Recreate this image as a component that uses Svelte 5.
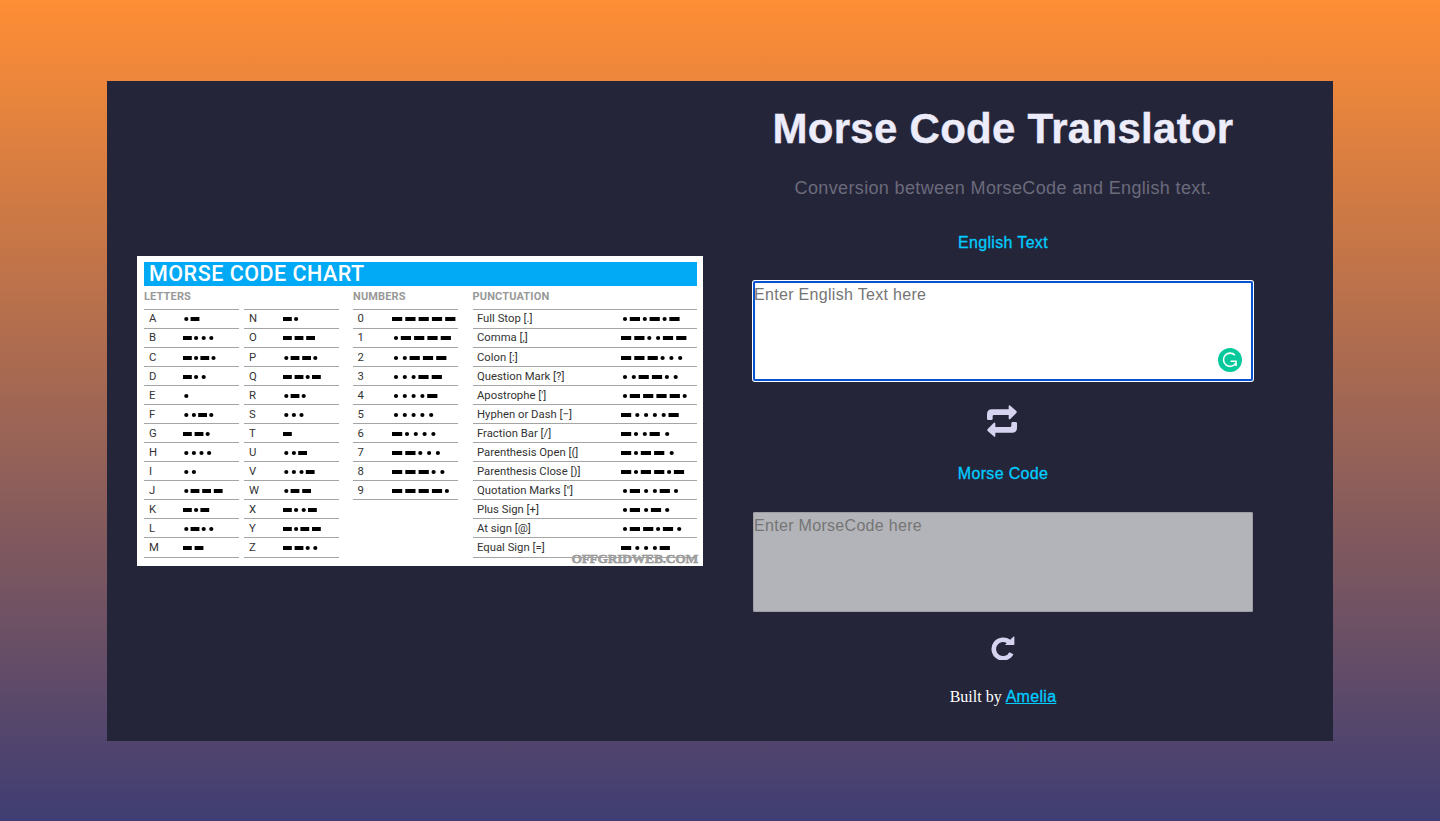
<script>
  const lettersA = [
    ['A', '.-'], ['B', '-...'], ['C', '-.-.'], ['D', '-..'], ['E', '.'],
    ['F', '..-.'], ['G', '--.'], ['H', '....'], ['I', '..'], ['J', '.---'],
    ['K', '-.-'], ['L', '.-..'], ['M', '--']
  ];
  const lettersB = [
    ['N', '-.'], ['O', '---'], ['P', '.--.'], ['Q', '--.-'], ['R', '.-.'],
    ['S', '...'], ['T', '-'], ['U', '..-'], ['V', '...-'], ['W', '.--'],
    ['X', '-..-'], ['Y', '-.--'], ['Z', '--..']
  ];
  const numbers = [
    ['0', '-----'], ['1', '.----'], ['2', '..---'], ['3', '...--'], ['4', '....-'],
    ['5', '.....'], ['6', '-....'], ['7', '--...'], ['8', '---..'], ['9', '----.']
  ];
  // A space in a code widens the gap slightly.
  const punctuation = [
    ['Full Stop [.]', '.-.-.-'], ['Comma [,]', '--..--'], ['Colon [:]', '---...'],
    ['Question Mark [?]', '..--..'], ["Apostrophe [']", '.----.'],
    ['Hyphen or Dash [−]', '- ....-'], ['Fraction Bar [/]', '-..-  .'],
    ['Parenthesis Open [(]', '-.--  .'], ['Parenthesis Close [)]', '-.--.-'],
    ['Quotation Marks ["]', '.- ..- .'], ['Plus Sign [+]', '.- .- .'],
    ['At sign [@]', '.--.- .'], ['Equal Sign [=]', '- ...-']
  ];

  const small = { dash: 8.8, first: 3.3, near: 4.3, dots: 7.6, gap: 2.8 };
  const large = { dash: 10.2, first: 4, near: 4.8, dots: 8.8, gap: 3.1 };

  const columns = [
    { cls: 'la', title: 'LETTERS', rows: lettersA, m: small },
    { cls: 'lb', title: '', rows: lettersB, m: small },
    { cls: 'nu', title: 'NUMBERS', rows: numbers, m: large },
    { cls: 'pu', title: 'PUNCTUATION', rows: punctuation, m: large }
  ];

  function marks(code, m) {
    const out = [];
    let x = 0;
    let prev = '';
    for (const c of code) {
      if (c === ' ') {
        x += 1.3;
        continue;
      }
      if (c === '.') {
        x += prev === '' ? m.first : prev === '.' ? m.dots : m.near;
        out.push({ dot: true, x });
      } else {
        x += prev === '' ? 0 : prev === '.' ? m.near : m.gap;
        out.push({ dot: false, x });
        x += m.dash;
      }
      prev = c;
    }
    return out;
  }
</script>

<main class="card">
  <section class="left">
    <div class="chart">
      <div class="banner"><span>MORSE CODE CHART</span></div>
      <div class="columns">
        {#each columns as col}
          <div class="col {col.cls}">
            <div class="heading">{col.title}</div>
            <div class="rows">
              {#each col.rows as [name, code]}
                <div class="row">
                  <span class="name">{name}</span>
                  <svg class="code" width="70" height="6" viewBox="0 0 70 6">
                    {#each marks(code, col.m) as k}
                      {#if k.dot}
                        <circle cx={k.x} cy="3" r="2.1" />
                      {:else}
                        <rect x={k.x} y="1" width={col.m.dash} height="4" />
                      {/if}
                    {/each}
                  </svg>
                </div>
              {/each}
            </div>
          </div>
        {/each}
      </div>
      <div class="mark">OFFGRIDWEB.COM</div>
    </div>
  </section>

  <section class="right">
    <h1>Morse Code Translator</h1>
    <p class="sub">Conversion between MorseCode and English text.</p>
    <label for="english">English Text</label>
    <div class="field">
      <textarea id="english" class="active" placeholder="Enter English Text here"></textarea>
      <svg class="badge" width="24" height="24" viewBox="0 0 24 24">
        <circle cx="12" cy="12" r="12" fill="#07c99b" />
        <path d="M16.9 7.2A6.6 6.6 0 1 0 17.6 15.4M12.6 13.2H18V18" fill="none" stroke="#fff" stroke-width="1.6" />
      </svg>
    </div>
    <svg class="swap" width="30" height="32" viewBox="0 0 90 96">
      <path d="M0 41V28Q0 13 15 13H65V4Q65-2 70 2L88 18Q91 21 88 24L70 42Q65 46 65 39V30H21Q17 30 17 34V41Q17 45 13 45H4Q0 45 0 41Z" />
      <path d="M90 55V68Q90 83 75 83H25V92Q25 98 20 94L2 78Q-1 75 2 72L20 54Q25 50 25 57V66H69Q73 66 73 62V55Q73 51 77 51H86Q90 51 90 55Z" />
    </svg>
    <label for="morse">Morse Code</label>
    <div class="field">
      <textarea id="morse" class="idle" placeholder="Enter MorseCode here"></textarea>
    </div>
    <svg class="redo" width="24" height="24" viewBox="0 0 24 24">
      <path class="arc" d="M18.6 6.4A9.3 9.3 0 1 0 20.4 17.2" />
      <path class="head" d="M22.6 0.6Q23.4 0 23.4 1V8.2Q23.4 9 22.6 9H14.8Q13.8 9 14.5 8.2Z" />
    </svg>
    <div class="footer">Built by <a href="#amelia">Amelia</a></div>
  </section>
</main>

<style>
  :global(body) {
    min-height: 821px;
    background: linear-gradient(#ff8e35, #3f3d73);
  }
  :global(#app) {
    display: flex;
    justify-content: center;
    padding-top: 81px;
  }
  .card {
    box-sizing: border-box;
    display: flex;
    width: 1226px;
    height: 660px;
    background: #252539;
    font-family: "Liberation Sans", Arial, sans-serif;
  }
  .left {
    display: flex;
    align-items: center;
    padding-left: 30px;
  }
  .chart {
    position: relative;
    box-sizing: border-box;
    width: 566px;
    height: 310px;
    padding: 5.5px 6.5px 0 7px;
    background: #fff;
    font-family: Roboto, sans-serif;
  }
  .banner {
    height: 24px;
    padding-left: 5px;
    background: #02a9f4;
    color: #fff;
    font-size: 21.5px;
    font-weight: 500;
    line-height: 24px;
    letter-spacing: 0.5px;
    white-space: nowrap;
  }
  .columns {
    display: flex;
    align-items: flex-start;
  }
  .la { width: 95px; margin-right: 5px; }
  .lb { width: 95px; margin-right: 14px; }
  .nu { width: 105px; margin-right: 14.5px; }
  .pu { width: 224px; }
  .heading {
    height: 23.4px;
    color: #999;
    font-size: 11px;
    font-weight: 700;
    line-height: 22px;
    letter-spacing: 0.15px;
    white-space: nowrap;
  }
  .rows {
    border-top: 1px solid #a5a5a5;
  }
  .row {
    box-sizing: border-box;
    display: flex;
    align-items: center;
    height: 19.05px;
    padding-top: 1px;
    border-bottom: 1px solid #a5a5a5;
    color: #333;
    font-size: 11.3px;
    line-height: 18px;
    white-space: nowrap;
  }
  .name {
    box-sizing: border-box;
    flex: none;
    width: 38.7px;
    padding-left: 5px;
  }
  .nu .name { padding-left: 4.5px; }
  .pu .name { width: 148px; padding-left: 4.5px; }
  .code {
    flex: none;
    overflow: visible;
    fill: #000;
  }
  .mark {
    position: absolute;
    right: 5px;
    bottom: 0;
    color: #a5a5a5;
    font-family: "Liberation Serif", serif;
    font-size: 13.5px;
    font-weight: 700;
    line-height: 15px;
    letter-spacing: -0.25px;
    -webkit-text-stroke: 0.5px #909090;
  }
  .right {
    display: flex;
    flex-direction: column;
    align-items: center;
    width: 500px;
    margin-left: 50px;
  }
  h1 {
    margin: 24px 0 0;
    color: #ececfb;
    font-size: 42px;
    line-height: 48px;
    letter-spacing: 0.28px;
    white-space: nowrap;
    -webkit-text-stroke: 0.4px #ececfb;
  }
  .sub {
    margin: 25px 0 0;
    color: #6b6b7c;
    font-size: 18px;
    line-height: 20px;
    letter-spacing: 0.36px;
    white-space: nowrap;
  }
  label {
    color: #00ccff;
    font-size: 16px;
    line-height: 18px;
    letter-spacing: 0.33px;
    -webkit-text-stroke: 0.3px #00ccff;
  }
  .sub + label { margin-top: 36px; }
  .field {
    position: relative;
    width: 500px;
    height: 100px;
    margin-top: 29px;
  }
  textarea {
    box-sizing: border-box;
    display: block;
    width: 500px;
    height: 100px;
    margin: 0;
    padding: 5px 1px;
    border: 0;
    border-radius: 2px;
    outline: none;
    resize: none;
    font: 16px/18px "Liberation Sans", Arial, sans-serif;
    letter-spacing: 0.31px;
  }
  textarea::placeholder { color: #757575; }
  .active {
    background: #fff;
    box-shadow: inset 0 0 0 2px #0552d0, 0 0 0 1px #fff;
  }
  .idle {
    background: #b3b4b9;
    box-shadow: inset 0 0 0 1px #9d9da3;
  }
  .badge {
    position: absolute;
    right: 11px;
    bottom: 9px;
  }
  .swap {
    margin: 24px 2px 28px 0;
    overflow: visible;
    fill: #d6d3f0;
  }
  .redo {
    margin: 24px 1px 0 0;
  }
  .arc {
    fill: none;
    stroke: #d6d3f0;
    stroke-width: 4.6;
  }
  .head { fill: #d6d3f0; }
  .footer {
    margin-top: 27px;
    color: #fff;
    font-family: "Liberation Serif", serif;
    font-size: 16px;
    line-height: 20px;
  }
  .footer a {
    color: #00ccff;
    font-family: "Liberation Sans", Arial, sans-serif;
    letter-spacing: 0.3px;
    -webkit-text-stroke: 0.3px #00ccff;
  }
</style>
